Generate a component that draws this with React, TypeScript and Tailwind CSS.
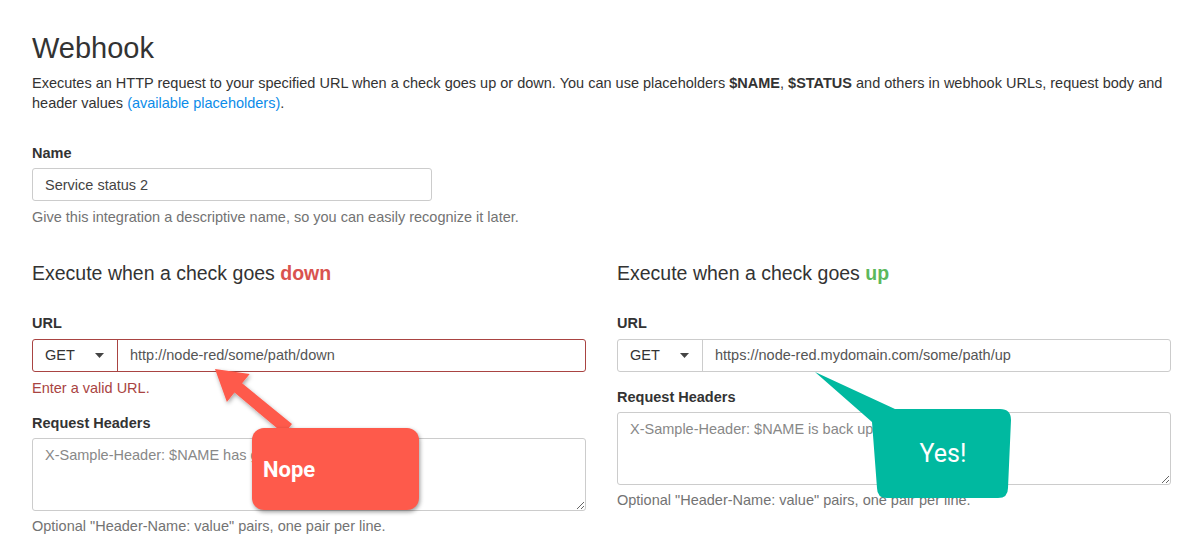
import React from "react";

const Label = ({ children }: { children: React.ReactNode }) => (
  <div className="text-[14.5px] leading-[20px] font-bold text-[#333]">{children}</div>
);

const Help = ({ children, className = "" }: { children: React.ReactNode; className?: string }) => (
  <div className={`text-[14.5px] leading-[20px] text-[#737373] ${className}`}>{children}</div>
);

const UrlGroup = ({ url, error }: { url: string; error?: boolean }) => {
  const border = error ? "border-[#a94442]" : "border-[#ccc]";
  return (
    <div className={`mt-[6px] flex h-[33px] rounded-[3px] border ${border} bg-white`}>
      <div className={`flex w-[85px] shrink-0 items-center justify-between border-r ${border} pl-[12px] pr-[13px] text-[14.5px] text-[#333]`}>
        <span>GET</span>
        <svg width="9" height="5" viewBox="0 0 9 5">
          <path d="M0 0 L9 0 L4.5 5 Z" fill="#444" />
        </svg>
      </div>
      <input
        readOnly
        value={url}
        className="min-w-0 flex-1 bg-transparent px-[12px] text-[14.5px] text-[#555] outline-none"
      />
    </div>
  );
};

const Headers = ({ placeholder }: { placeholder: string }) => (
  <textarea
    readOnly
    placeholder={placeholder}
    className="mt-[5px] block h-[73px] w-full resize-y rounded-[3px] border border-[#ccc] px-[12px] py-[6px] text-[14.5px] leading-[20px] outline-none placeholder:text-[#888]"
  />
);

export default function App() {
  return (
    <div
      className="relative h-[555px] w-[1192px] overflow-hidden bg-white pl-[32px] pr-[21px] pt-[30px] text-[#333]"
      style={{ fontFamily: '"Liberation Sans", Arial, sans-serif' }}
    >
      <h1 className="text-[29px] leading-[36px] font-normal text-[#333]">Webhook</h1>
      <p className="mt-[7px] w-[1135px] text-[14.5px] leading-[20px]">
        Executes an HTTP request to your specified URL when a check goes up or down. You can use placeholders{" "}
        <b>$NAME</b>, <b>$STATUS</b> and others in webhook URLs, request body and header values{" "}
        <a className="text-[#0c8ce9]">(available placeholders)</a>.
      </p>

      {/* name */}
      <div className="mt-[30px]">
        <Label>Name</Label>
        <input
          readOnly
          value="Service status 2"
          className="mt-[5px] block h-[33px] w-[400px] rounded-[3px] border border-[#ccc] px-[12px] text-[14.5px] text-[#444] outline-none"
        />
        <Help className="mt-[6px]">
          Give this integration a descriptive name, so you can easily recognize it later.
        </Help>
      </div>

      {/* down / up columns */}
      <div className="mt-[34px] grid grid-cols-2 gap-[31px]">
        <div>
          <h2 className="text-[19.5px] leading-[24px] text-[#333]">
            Execute when a check goes <b className="text-[#d9534f]">down</b>
          </h2>
          <div className="mt-[28px]">
            <Label>URL</Label>
            <UrlGroup url="http://node-red/some/path/down" error />
            <div className="mt-[6px] text-[14.5px] leading-[20px] text-[#a94442]">Enter a valid URL.</div>
          </div>
          <div className="mt-[15px]">
            <Label>Request Headers</Label>
            <Headers placeholder="X-Sample-Header: $NAME has gone down" />
            <Help className="mt-[5px]">Optional "Header-Name: value" pairs, one pair per line.</Help>
          </div>
        </div>

        <div>
          <h2 className="text-[19.5px] leading-[24px] text-[#333]">
            Execute when a check goes <b className="text-[#5cb85c]">up</b>
          </h2>
          <div className="mt-[28px]">
            <Label>URL</Label>
            <UrlGroup url="https://node-red.mydomain.com/some/path/up" />
          </div>
          <div className="mt-[15px]">
            <Label>Request Headers</Label>
            <Headers placeholder="X-Sample-Header: $NAME is back up" />
            <Help className="mt-[5px]">Optional "Header-Name: value" pairs, one pair per line.</Help>
          </div>
        </div>
      </div>

      {/* annotations */}
      <svg className="pointer-events-none absolute left-0 top-0" width="1192" height="555">
        <defs>
          <filter id="sh" x="-20%" y="-20%" width="140%" height="140%">
            <feDropShadow dx="1" dy="2" stdDeviation="2" floodColor="#000" floodOpacity="0.35" />
          </filter>
        </defs>
        <polygon
          points="215,369 249.7,374 242.1,383.2 292,424 284,434 234.5,392.6 226.9,401.9"
          fill="#fe5a4b"
          filter="url(#sh)"
        />
        <path
          d="M815,372 L895,409 L1000,409 Q1011,409 1011,420 L1008,488 Q1008,498 998,498 L887,498 Q877,498 877,488 L872,422 Z"
          fill="#00b9a0"
        />
      </svg>
      <div className="absolute left-[252px] top-[428px] flex h-[82px] w-[167px] items-center rounded-[12px] bg-[#fe5a4b] pl-[11px] shadow-[1px_2px_4px_rgba(0,0,0,0.4)]">
        <span className="text-[22px] font-bold text-white" style={{ fontFamily: "Roboto, sans-serif" }}>
          Nope
        </span>
      </div>
      <div
        className="absolute left-[877px] top-[409px] flex h-[89px] w-[132px] items-center justify-center text-[25px] text-white"
        style={{ fontFamily: "Roboto, sans-serif" }}
      >
        Yes!
      </div>
    </div>
  );
}
